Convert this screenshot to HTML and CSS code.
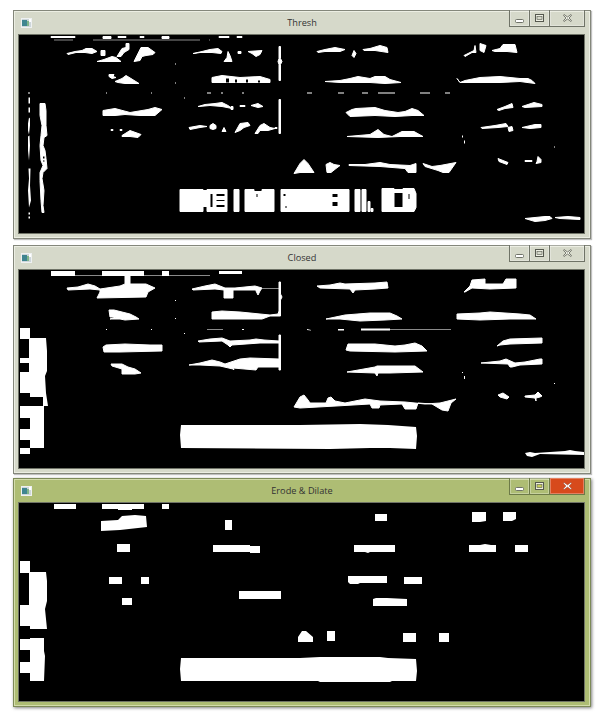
FILE: index.html
```html
<!DOCTYPE html>
<html lang="en">
<head>
<meta charset="utf-8">
<title>Thresh, Closed, Erode &amp; Dilate</title>
<link rel="stylesheet" href="styles.css">
</head>
<body>
<main class="desktop">

<section class="window window-thresh">
  <header class="titlebar">
    <svg class="app-icon" viewBox="0 0 11 10"><rect width="11" height="10" fill="#eef1f2"/><rect x="1" y="1" width="9" height="8" fill="#cdd6da"/><rect x="1" y="2" width="5" height="6" fill="#3f8590"/><rect x="6" y="3" width="2" height="5" fill="#7fb48a"/><rect x="8" y="1" width="2" height="3" fill="#fff"/></svg>
    <h2 class="title">Thresh</h2>
    <div class="caption">
      <span class="btn btn-min"><svg viewBox="0 0 9 4"><rect x=".5" y=".5" width="8" height="3" rx="1" fill="#fff" stroke="#6f7268"/></svg></span>
      <span class="btn btn-max"><svg viewBox="0 0 9 8"><rect x=".5" y=".5" width="8" height="7" fill="#eef0e4" stroke="#55584e"/><rect x="2" y="2.5" width="5" height="3" fill="#d6d9ca" stroke="#55584e" stroke-width=".6"/></svg></span>
      <span class="btn btn-close"><svg viewBox="0 0 9 8"><path d="M1 .5 4.5 3 8 .5 8.5 1.5 6 4 8.5 6.5 8 7.5 4.5 5 1 7.5.5 6.5 3 4 .5 1.5Z" fill="#eef0e6" stroke="#5f6258" stroke-width=".8"/></svg></span>
    </div>
  </header>
  <svg class="canvas" viewBox="19 35 565 197">
    <path class="ink blobby" fill-rule="evenodd" d="M51 36H75V37H51ZM103 36H111V38H103ZM118 36H126V37H118ZM140 36H144V37H140ZM162 36H169V38H162ZM219 36H229V37H219ZM237 36H242V37H237Z"/>
    <path class="line" d="M54 39.5H73M93 39.5H200M209 39.5H210"/>
    <path class="ink blobby" d="M67 53 75 51 82 50 86 48 92 48 97 51 92 53 85 52 76 52 68 54ZM97 61 104 59 112 56 116 57 121 61 110 61ZM117 56 122 48 126 47 126 43 129 43 129 49 124 52 121 56ZM134 61 141 47 148 47 155 52 153 54 146 55 142 56 140 60ZM101 50H105V55H101ZM193 53 202 51 210 49 218 48 222 51 221 53 212 52 200 52 194 53ZM224 61 227 57 228 51 230 55 232 61ZM238 51H241V53H238ZM248 51 262 50 260 54 256 56 252 53ZM279 46H280.5V58L282 61 280.5 64V80H279V64L278 61 279 58ZM279 99H280.5V133H279Z"/>
    <path class="ink blobby" d="M109 74 114 74 113 76 116 77 112 78 109 76ZM115 81 122 78 126 75 131 78 139 83 125 83 118 82ZM212 77 222 75 240 77 260 76 270 79 270 82 240 82 225 82 212 82Z"/>
    <path class="ink" d="M175 63H176V64H175ZM175 82H176V83H175ZM106 92H107V93H106ZM151 92H152V93H151ZM184 97H185V98H184ZM207 92H211V93H207ZM221 92H223V93H221ZM242 92H244V93H242Z"/>
    <path class="hole" d="M226 78H229V82H226ZM235 79H237V82H235ZM246 79H248V82H246ZM258 80H260V82H258Z"/>
    <path class="ink blobby" d="M103 110 115 108 130 112 142 110 148 109 155 107 162 109 155 115 140 115 125 114 115 115 103 115ZM111 129H113V130H111ZM120 129H122V130H120ZM122 135 130 130 141 134 138 137 130 136 122 136ZM198 106 205 104 215 103 222 102 228 105 232 108 222 106 210 105 199 106ZM231 106H233V109H231ZM240 105H245V106H240ZM251 105 258 103 263 106 258 107ZM189 127 200 125 207 126 200 127 190 129ZM213 123 216 125 216 128 213 129 210 128 210 125ZM222 131 224 127 226 131ZM235 132 240 123 248 122 250 125 244 127 240 130ZM255 133 260 125 264 123 270 127 275 128 268 130 260 130 258 133ZM275 127H277V128H275Z"/>
    <path class="ink" d="M28 92H30V93H28ZM28.500 97H30V103H28.500ZM28.500 107H30V112H28.500ZM29 117 30 118 30 125 29 134 28 130 28 123ZM28 136 29.500 135 30 145 29 160 28 150ZM28.500 168H30.500L30 185 31 200 29 207 28 190 29 178ZM28.500 212H30V214H28.500ZM28.500 216H30V218H28.500Z"/>
    <path class="ink blobby" fill-rule="evenodd" d="M40 103 45 103 46 110 46 125 47 135 44 137 43 145 45 150 46 158 47 168 43 172 42 178 44 190 43 205 44 212 42 212 41 200 40 180 40 172 43 165 41 160 40 145 41 135 42 125 40 115Z"/>
    <path class="hole" d="M43 156H44.500V158H43ZM43 160H44.500V161H43Z"/>
    <path class="ink blobby" d="M317 51 325 49 335 47 345 49 340 51 325 51 318 52ZM352 55 354 50 356 53 354 57ZM363 49 370 48 380 45 387 47 388 52 375 50 364 50ZM464 55 474 50 475 45 476 52 472 52 465 56ZM480 43 486 45 484 52 480 50ZM492 50 500 48 503 44 515 44 517 52 507 51 495 51ZM325 81 340 80 350 78 358 76 370 78 375 76 385 76 390 79 401 82 385 83 370 82 355 82 340 82ZM457 78 460 82 465 80 480 77 500 76 520 78 528 78 532 80 535 83 520 81 500 82 470 82 460 82Z"/>
    <path class="ink" d="M307 92H312V93H307ZM338 92H344V93H338ZM362 92H368V93H362ZM378 92H395V93H378ZM420 92H430V93H420ZM445 92H450V93H445Z"/>
    <path class="ink blobby" d="M346 112 352 109 356 108 375 107 385 110 398 112 405 111 412 108 418 110 424 115 412 115 395 116 375 115 350 116ZM347 136 370 134 378 129 384 134 392 136 402 131 414 131 423 136 400 136 378 137ZM497 109 505 106 512 103 513 107 505 108 499 110ZM522 106 534 102 542 104 542 106 525 107ZM481 127 495 125 506 123 508 126 498 127 482 128ZM508 127 512 126 513 130 509 131ZM522 127 535 124 541 124 541 127 530 128ZM498 158 508 162 507 164 499 161ZM525 160H532V161H525ZM537 161 538 156 541 159 541 162 536 163Z"/>
    <path class="ink" d="M462 135H463V137H462ZM464 140H465V143H464ZM554 146H555V147H554Z"/>
    <path class="ink blobby" d="M294 173 300 163 304 159 308 163 314 172 300 172ZM326 164 330 162 334 164 340 165 336 168 331 172 327 172ZM349 164 365 164 380 162 390 164 410 165 416 163 416 172 408 172 405 168 380 166 349 165ZM423 163 432 166 440 165 456 162 449 172 443 172 438 170 425 166Z"/>
    <path class="ink blobby" fill-rule="evenodd" d="M180 189H203V190H207V189H227V211H207V206H203V211H180ZM210 193H213V207H210ZM216 193H225V196H216ZM216 199H225V201H216ZM216 204H225V207H216ZM234 189H239V211H234ZM245 189H254V191H262V189H274V211H245ZM256 193H258V197H256ZM281 189H349V211H281ZM283 193H286V196H283ZM285 205H287V208H285ZM332 193H338V197H332ZM332 201H338V206H332ZM355 189H360V211H355ZM362 189H366V211H362ZM368 201H370V211H368ZM371 208H373V211H371ZM382 188H394V189H403V192H394V207H403V188H414L416 193V207L414 211H382ZM408 193H410V199H408Z"/>
    <path class="ink blobby" d="M525 218 535 217 545 216 550 216 552 218 545 220 535 221ZM555 217 568 216 580 217 580 219 560 218Z"/>
  </svg>
</section>

<section class="window window-closed">
  <header class="titlebar">
    <svg class="app-icon" viewBox="0 0 11 10"><rect width="11" height="10" fill="#eef1f2"/><rect x="1" y="1" width="9" height="8" fill="#cdd6da"/><rect x="1" y="2" width="5" height="6" fill="#3f8590"/><rect x="6" y="3" width="2" height="5" fill="#7fb48a"/><rect x="8" y="1" width="2" height="3" fill="#fff"/></svg>
    <h2 class="title">Closed</h2>
    <div class="caption">
      <span class="btn btn-min"><svg viewBox="0 0 9 4"><rect x=".5" y=".5" width="8" height="3" rx="1" fill="#fff" stroke="#6f7268"/></svg></span>
      <span class="btn btn-max"><svg viewBox="0 0 9 8"><rect x=".5" y=".5" width="8" height="7" fill="#eef0e4" stroke="#55584e"/><rect x="2" y="2.5" width="5" height="3" fill="#d6d9ca" stroke="#55584e" stroke-width=".6"/></svg></span>
      <span class="btn btn-close"><svg viewBox="0 0 9 8"><path d="M1 .5 4.5 3 8 .5 8.5 1.5 6 4 8.5 6.5 8 7.5 4.5 5 1 7.5.5 6.5 3 4 .5 1.5Z" fill="#eef0e6" stroke="#5f6258" stroke-width=".8"/></svg></span>
    </div>
  </header>
  <svg class="canvas" viewBox="19 269 565 198">
    <path class="ink" d="M51 270H75V275H51ZM102 270H144V275H102ZM162 270H169V275H162ZM219 270H242V273H219Z"/>
    <path class="line" d="M75 274.500H102M144 274.500H162M169 274.500H210"/>
    <path class="ink blobby" d="M125 275H130V283H146L155 287 148 291 146 296 97 297 100 291 100 289 90 288 68 289 67 287 78 286 88 283 95 285 100 288 120 285 125 283ZM192 288 205 285 215 283 225 287 235 287 255 285 262 287 260 290 258 294 256 290 256 289 233 289 233 297 224 297 224 289 215 288 193 289Z"/>
    <path class="line" d="M262 287.500H279"/>
    <path class="ink blobby" d="M279 281H280.500V293L282 296 280.500 299V315H270L262 318H240L212 318 212 311 222 310 240 311 260 313 270 314 278 313 279 310ZM109 309 114 309 122 311 130 313 136 316 139 318 125 319 120 318 110 318 116 316 110 316Z"/>
    <path class="ink" d="M106 328H107V329H106ZM151 328H152V329H151ZM175 299H176V300H175ZM175 317H176V318H175ZM184 332H185V333H184ZM242 328H244V329H242Z"/>
    <path class="line" d="M207 328.500H223"/>
    <path class="ink blobby" d="M103 346 106 344 125 343 150 344 162 344 162 350 120 351 104 351ZM111 363 122 363 128 366 135 368 141 372 135 373 122 373 122 368 112 365ZM198 340 210 338 222 337 230 340 250 339 256 338 264 339 279 340 279 334 280.500 334 280.500 369 279 369 279 366 258 366 256 369 233 367 234 369 233 368 220 365 200 364 189 364 200 362 212 359 220 361 225 363 240 358 250 357 279 358 279 342 264 342 260 342 232 344 230 346 228 344 222 340 199 341Z"/>
    <path class="ink blobby" d="M317 285 330 284 340 282 345 283 375 282 387 281 388 287 375 288 355 289 353 292 350 288 320 287ZM464 291 470 285 472 279 485 278 485 283 503 283 506 278 516 278 516 287 490 288 472 287 465 291ZM326 318 345 314 370 312 390 312 397 315 402 318 385 319 360 320 340 318ZM457 313 480 312 490 311 520 313 530 314 536 318 510 318 480 319 457 318Z"/>
    <path class="ink" d="M307 328 311 329 311 329.500 307 329ZM338 328H344V329.500H338ZM361 327.500H390V329.500H361Z"/>
    <path class="line" d="M390 328.500H451"/>
    <path class="ink blobby" d="M346 349 348 343 375 343 395 345 405 344 415 342 422 345 427 350 395 351 350 350ZM347 371 375 366 377 365 415 365 423 371 390 372 378 372 377 375 375 372ZM497 345 503 340 510 338 542 337 542 342 510 343 500 344ZM481 362 500 360 506 358 515 362 525 361 540 358 542 358 542 363 520 364 512 366 510 366 508 363ZM498 394 503 392 509 396 507 398 500 396ZM525 395 535 394 538 391 542 395 540 396 536 397 536 400 535 397 525 396ZM294 406 300 396 304 394 308 399 310 402 326 402 328 397 331 396 335 400 345 402 365 398 380 400 405 401 425 403 440 402 456 398 451 402 448 410 442 409 432 403 418 402 416 408 405 408 402 403 380 404 379 407 372 407 370 403 336 405 300 407Z"/>
    <path class="ink" d="M462 371H463V372H462ZM464 375H465V378H464ZM554 382H555V383H554Z"/>
    <path class="ink" d="M181 424 300 424 360 423 388 424 416 426 417 435 416 448 390 447 370 447 330 448 181 447 180 434ZM525 452 530 451 535 452 565 450 570 449 575 450 584 451 584 454 540 453 532 456 527 455Z"/>
    <path class="ink" d="M20 327H30V337H46L47 350 47 370 45 375 46 392 48 405 44 405 44 447 30 447V453H20V447H30V439H20V428H30V417H20V405H43V396H30V392H20V371H29V362H20V357H29V338H20Z"/>
  </svg>
</section>

<section class="window window-erode is-active">
  <header class="titlebar">
    <svg class="app-icon" viewBox="0 0 11 10"><rect width="11" height="10" fill="#eef1f2"/><rect x="1" y="1" width="9" height="8" fill="#cdd6da"/><rect x="1" y="2" width="5" height="6" fill="#3f8590"/><rect x="6" y="3" width="2" height="5" fill="#7fb48a"/><rect x="8" y="1" width="2" height="3" fill="#fff"/></svg>
    <h2 class="title">Erode &amp; Dilate</h2>
    <div class="caption">
      <span class="btn btn-min"><svg viewBox="0 0 9 4"><rect x=".5" y=".5" width="8" height="3" rx="1" fill="#fff" stroke="#6f7268"/></svg></span>
      <span class="btn btn-max"><svg viewBox="0 0 9 8"><rect x=".5" y=".5" width="8" height="7" fill="#f0f2dc" stroke="#55584e"/><rect x="2" y="2.5" width="5" height="3" fill="#c9cf5a" stroke="#55584e" stroke-width=".6"/></svg></span>
      <span class="btn btn-close"><svg viewBox="0 0 9 8"><path d="M1 .5 4.5 3 8 .5 8.5 1.500 6 4 8.5 6.5 8 7.500 4.500 5 1 7.500.5 6.500 3 4 .5 1.500Z" fill="#fff" stroke="#8a5a48" stroke-width=".5"/></svg></span>
    </div>
  </header>
  <svg class="canvas" viewBox="19 502 565 198">
    <path class="ink" d="M54 503H76V508H54ZM102 503H144V508H132V509H118V508H102ZM162 503H169V508H162ZM101 520 118 519 122 515 135 514 146 515 147 526 120 529 101 530ZM225 519H232V529H225ZM117 543H130V551H117ZM213 544H250V545H260V552H250V551H213ZM109 576H122V583H109ZM141 576H149V583H141ZM122 597H132V604H122ZM239 590H281V598H239Z"/>
    <path class="ink" d="M20 560H30V571H46L47 580 47 600 45 608 47 628 30 628V625H20V604H29V572H20ZM30 637H44V650L45 655 44 680H30V672H20V661H30V649H20V638H30Z"/>
    <path class="ink" d="M375 513H387V520H375ZM472 511H486V520L480 521H472ZM503 511H516V518L512 520H503ZM354 544H395V551H370L368 552 365 551H354ZM469 544H480L485 543 491 544H496V551H469ZM515 544H528V551H515ZM348 575H387V582H360L358 583H350L348 581ZM404 576H422V583H404ZM373 598 376 597H387L407 598V605H373ZM298 636 302 630 306 630 313 636 313 641 298 641ZM327 630H335V640H327ZM403 632H416V641H403ZM439 632H449V641H439Z"/>
    <path class="ink" d="M181 657H300L320 656H380L388 657 416 658 417 670 416 680H392L390 681H320L318 680H190L181 680 180 668Z"/>
  </svg>
</section>

</main>
</body>
</html>
```
FILE: styles.css
```css
html, body {
  margin: 0;
  padding: 0;
  background: #fff;
}

.desktop {
  position: relative;
  width: 600px;
  height: 724px;
  overflow: hidden;
}

.window {
  position: absolute;
  left: 13px;
  width: 578px;
  box-sizing: border-box;
  display: flex;
  flex-direction: column;
  padding: 0 5px 5px;
  background: #d6d9ca;
  border: 1px solid #84877b;
  box-shadow: inset 0 0 0 1px #eceee3, 1px 1px 1px rgba(0, 0, 0, .25);
}

.window-thresh { top: 10px; height: 229px; }
.window-closed { top: 245px; height: 229px; }
.window-erode  { top: 478px; height: 229px; }

.window.is-active {
  background: #aebd74;
  border-color: #7d8a58;
  box-shadow: inset 0 0 0 1px #d3dcab, 1px 1px 3px rgba(0, 0, 0, .5);
}

.titlebar {
  display: grid;
  grid-template-columns: 1fr auto 1fr;
  align-items: center;
  height: 24px;
  flex: none;
}

.app-icon {
  width: 11px;
  height: 10px;
  margin: 0 0 0 2px;
  display: block;
  filter: blur(.3px);
}

.title {
  margin: 0;
  font: 400 9.2px/24px "Open Sans", sans-serif;
  color: #333;
}

.caption {
  justify-self: end;
  align-self: start;
  display: flex;
  margin-top: -1px;
}

.btn {
  box-sizing: border-box;
  width: 21px;
  height: 17px;
  display: flex;
  align-items: center;
  justify-content: center;
  border: 1px solid #6f7367;
  border-top: 0;
  margin-left: -1px;
  box-shadow: inset 0 0 0 1px rgba(255, 255, 255, .3);
}

.btn-close { width: 36px; }

.btn-min svg { width: 9px; height: 4px; margin-top: 5px; }
.btn-max svg { width: 9px; height: 8px; }
.btn-close svg { width: 9px; height: 8px; }

.is-active .btn { border-color: #6d7a48; }
.is-active .btn-close { background: #d74a1c; }

.canvas {
  display: block;
  width: 565px;
  flex: 1 1 0;
  min-height: 0;
  background: #000;
  box-shadow: 0 0 0 1px #6f7367;
}

.ink {
  fill: #fff;
  filter: blur(.35px);
}

.blobby {
  stroke: #fff;
  stroke-width: 1;
  stroke-linejoin: round;
}

.hole { fill: #000; }
.line { fill: none; stroke: #8a8a8a; stroke-width: 1; }
```
